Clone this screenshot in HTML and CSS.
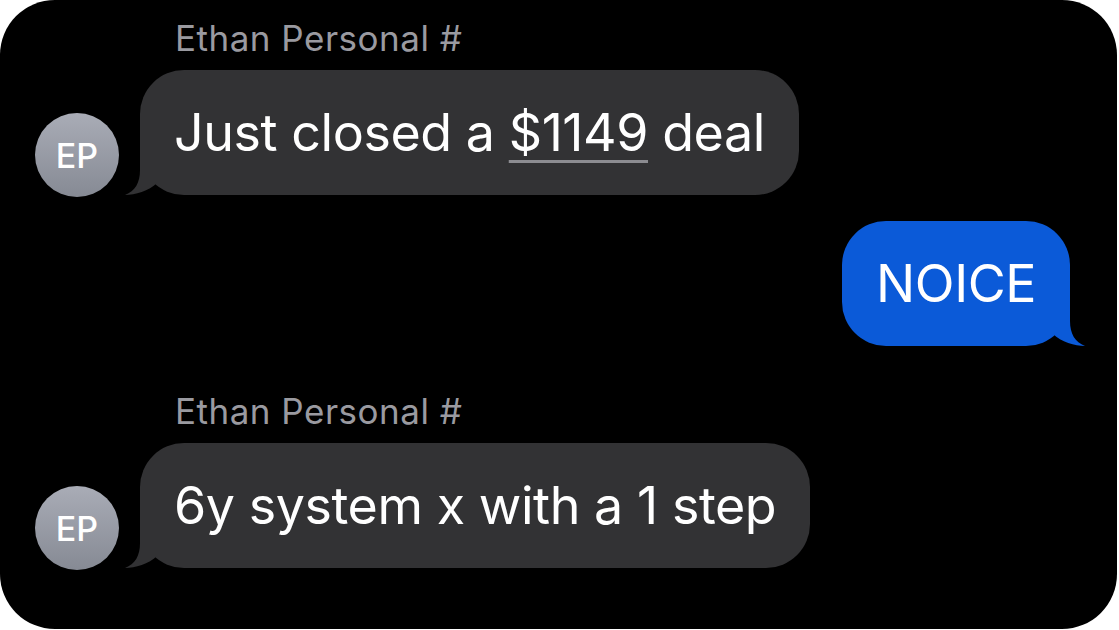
FILE: index.html
```html
<!DOCTYPE html>
<html>
<head>
    <title>Messages</title>
    <link rel="stylesheet" href="styles.css">
</head>
<body>
    <div class="screen">
        <div class="incoming">
            <div class="sender">Ethan Personal #</div>
            <div class="row">
                <div class="avatar">EP</div>
                <div class="bubble gray">
                    Just closed a <span class="money">$1149</span> deal
                    <svg class="tail" width="40" height="45" viewBox="0 0 40 45"><path d="M15,0 L15,20 C15,33 10,41 0,45 C10,45 24,41 32,33 L32,0 Z"/></svg>
                </div>
            </div>
        </div>

        <div class="outgoing">
            <div class="bubble blue">
                NOICE
                <svg class="tail" width="40" height="45" viewBox="0 0 40 45"><path d="M15,0 L15,20 C15,33 10,41 0,45 C10,45 24,41 32,33 L32,0 Z"/></svg>
            </div>
        </div>

        <div class="incoming second">
            <div class="sender">Ethan Personal #</div>
            <div class="row">
                <div class="avatar">EP</div>
                <div class="bubble gray">
                    6y system x with a 1 step
                    <svg class="tail" width="40" height="45" viewBox="0 0 40 45"><path d="M15,0 L15,20 C15,33 10,41 0,45 C10,45 24,41 32,33 L32,0 Z"/></svg>
                </div>
            </div>
        </div>
    </div>
</body>
</html>
```

FILE: styles.css
```css
body {
    margin: 0;
    background: #fff;
    font-family: Inter, "Noto Sans", sans-serif;
}

.screen {
    width: 1117px;
    height: 629px;
    box-sizing: border-box;
    background: #000;
    border-radius: 55px;
    padding: 18px 47px 0 35px;
    overflow: hidden;
}

.sender {
    padding-left: 140px;
    font-size: 35px;
    line-height: 40px;
    letter-spacing: 0.5px;
    color: #9a9aa0;
    margin-bottom: 12px;
}

.row {
    display: flex;
    align-items: flex-end;
    gap: 21px;
}

.avatar {
    width: 84px;
    height: 84px;
    border-radius: 50%;
    background: linear-gradient(#a9acb6, #868a94);
    color: #fff;
    font-size: 34px;
    font-weight: 500;
    display: flex;
    align-items: center;
    justify-content: center;
    margin-bottom: -2px;
}

.bubble {
    position: relative;
    padding: 31px 34px;
    border-radius: 44px;
    font-size: 52px;
    line-height: 63px;
    letter-spacing: -0.45px;
    color: #fff;
}

.gray {
    background: #323234;
}

.gray .tail {
    fill: #323234;
}

.blue {
    background: #0b5ad8;
}

.blue .tail {
    fill: #0b5ad8;
}

.tail {
    position: absolute;
    left: -15px;
    bottom: 0;
}

.blue .tail {
    left: auto;
    right: -15px;
    transform: scaleX(-1);
}

.money {
    text-decoration: underline;
    text-decoration-color: #8c8c91;
    text-decoration-thickness: 3px;
    text-underline-offset: 9px;
}

.outgoing {
    display: flex;
    justify-content: flex-end;
    margin-top: 26px;
}

.second {
    margin-top: 45px;
}
```
